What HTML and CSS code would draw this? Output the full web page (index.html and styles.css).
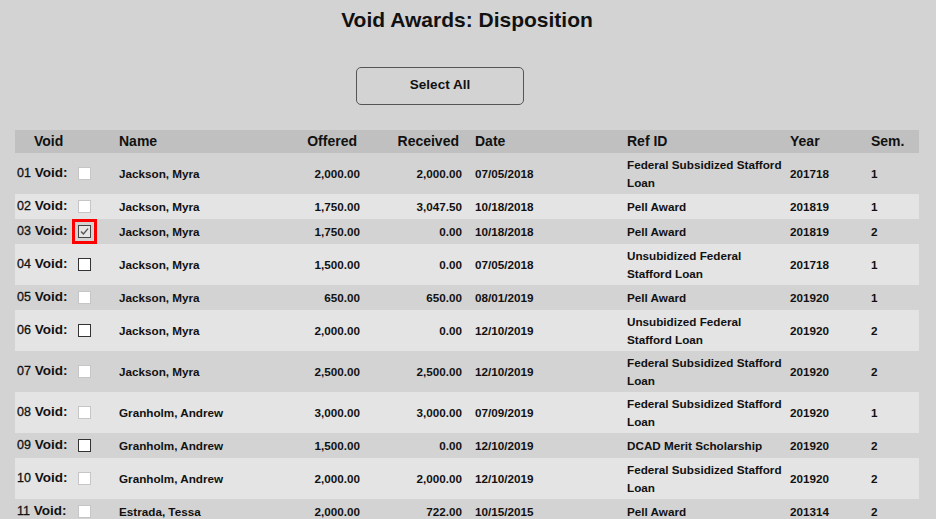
FILE: index.html
```html
<!DOCTYPE html>
<html>
<head>
<meta charset="utf-8">
<title>Void Awards: Disposition</title>
<link rel="stylesheet" href="styles.css">
</head>
<body>
<div class="page">
  <h1 class="title">Void Awards: Disposition</h1>
  <div class="toolbar">
    <button class="btn" type="button">Select All</button>
  </div>
  <table class="grid">
    <colgroup>
      <col class="c-void"><col class="c-name"><col class="c-off"><col class="c-rec"><col class="c-date"><col class="c-ref"><col class="c-year"><col class="c-sem">
    </colgroup>
    <thead>
      <tr>
        <th class="h-void">Void</th>
        <th class="h-name">Name</th>
        <th class="num h-num">Offered</th>
        <th class="num h-num">Received</th>
        <th class="date">Date</th>
        <th>Ref ID</th>
        <th>Year</th>
        <th>Sem.</th>
      </tr>
    </thead>
    <tbody>
      <tr>
        <td class="void"><div class="vwrap"><span class="vlab"><span class="idx">01</span> Void:</span><span class="cb cb-dis"></span></div></td>
        <td>Jackson, Myra</td><td class="num">2,000.00</td><td class="num">2,000.00</td><td class="date">07/05/2018</td>
        <td>Federal Subsidized Stafford<br>Loan</td><td>201718</td><td>1</td>
      </tr>
      <tr class="alt">
        <td class="void"><div class="vwrap"><span class="vlab"><span class="idx">02</span> Void:</span><span class="cb cb-dis"></span></div></td>
        <td>Jackson, Myra</td><td class="num">1,750.00</td><td class="num">3,047.50</td><td class="date">10/18/2018</td>
        <td>Pell Award</td><td>201819</td><td>1</td>
      </tr>
      <tr>
        <td class="void"><div class="vwrap"><span class="vlab"><span class="idx">03</span> Void:</span><span class="cb cb-on focus"><svg viewBox="0 0 11 11" width="11" height="11"><path d="M2 5.6 L4.4 8 L9 2.6" fill="none" stroke="#555" stroke-width="1.4"/></svg></span></div></td>
        <td>Jackson, Myra</td><td class="num">1,750.00</td><td class="num">0.00</td><td class="date">10/18/2018</td>
        <td>Pell Award</td><td>201819</td><td>2</td>
      </tr>
      <tr class="alt">
        <td class="void"><div class="vwrap"><span class="vlab"><span class="idx">04</span> Void:</span><span class="cb cb-en"></span></div></td>
        <td>Jackson, Myra</td><td class="num">1,500.00</td><td class="num">0.00</td><td class="date">07/05/2018</td>
        <td>Unsubidized Federal<br>Stafford Loan</td><td>201718</td><td>1</td>
      </tr>
      <tr>
        <td class="void"><div class="vwrap"><span class="vlab"><span class="idx">05</span> Void:</span><span class="cb cb-dis"></span></div></td>
        <td>Jackson, Myra</td><td class="num">650.00</td><td class="num">650.00</td><td class="date">08/01/2019</td>
        <td>Pell Award</td><td>201920</td><td>1</td>
      </tr>
      <tr class="alt">
        <td class="void"><div class="vwrap"><span class="vlab"><span class="idx">06</span> Void:</span><span class="cb cb-en"></span></div></td>
        <td>Jackson, Myra</td><td class="num">2,000.00</td><td class="num">0.00</td><td class="date">12/10/2019</td>
        <td>Unsubidized Federal<br>Stafford Loan</td><td>201920</td><td>2</td>
      </tr>
      <tr>
        <td class="void"><div class="vwrap"><span class="vlab"><span class="idx">07</span> Void:</span><span class="cb cb-dis"></span></div></td>
        <td>Jackson, Myra</td><td class="num">2,500.00</td><td class="num">2,500.00</td><td class="date">12/10/2019</td>
        <td>Federal Subsidized Stafford<br>Loan</td><td>201920</td><td>2</td>
      </tr>
      <tr class="alt">
        <td class="void"><div class="vwrap"><span class="vlab"><span class="idx">08</span> Void:</span><span class="cb cb-dis"></span></div></td>
        <td>Granholm, Andrew</td><td class="num">3,000.00</td><td class="num">3,000.00</td><td class="date">07/09/2019</td>
        <td>Federal Subsidized Stafford<br>Loan</td><td>201920</td><td>1</td>
      </tr>
      <tr>
        <td class="void"><div class="vwrap"><span class="vlab"><span class="idx">09</span> Void:</span><span class="cb cb-en"></span></div></td>
        <td>Granholm, Andrew</td><td class="num">1,500.00</td><td class="num">0.00</td><td class="date">12/10/2019</td>
        <td>DCAD Merit Scholarship</td><td>201920</td><td>2</td>
      </tr>
      <tr class="alt">
        <td class="void"><div class="vwrap"><span class="vlab"><span class="idx">10</span> Void:</span><span class="cb cb-dis"></span></div></td>
        <td>Granholm, Andrew</td><td class="num">2,000.00</td><td class="num">2,000.00</td><td class="date">12/10/2019</td>
        <td>Federal Subsidized Stafford<br>Loan</td><td>201920</td><td>2</td>
      </tr>
      <tr>
        <td class="void"><div class="vwrap"><span class="vlab"><span class="idx">11</span> Void:</span><span class="cb cb-dis"></span></div></td>
        <td>Estrada, Tessa</td><td class="num">2,000.00</td><td class="num">722.00</td><td class="date">10/15/2015</td>
        <td>Pell Award</td><td>201314</td><td>2</td>
      </tr>
    </tbody>
  </table>
</div>
</body>
</html>
```

FILE: styles.css
```css
html, body {
  margin: 0;
  padding: 0;
  background: #d3d3d3;
}
body {
  font-family: "Liberation Sans", Arial, sans-serif;
  color: #111;
  overflow: hidden;
}
.page {
  padding: 8px 17px 0 15px;
}
.title {
  margin: 0;
  text-align: center;
  font-size: 21px;
  line-height: 24px;
  font-weight: bold;
  color: #111;
}
.toolbar {
  display: flex;
  margin-top: 35px;
  padding-left: 341px;
}
.btn {
  width: 168px;
  height: 38px;
  background: #d3d3d3;
  border: 1px solid #555;
  border-radius: 5px;
  font-family: "Liberation Sans", Arial, sans-serif;
  font-size: 13.5px;
  font-weight: bold;
  color: #111;
  padding: 0 0 3px 0;
}
.grid {
  margin-top: 25px;
  width: 904px;
  border-collapse: collapse;
  table-layout: fixed;
}
.c-void { width: 101px; }
.c-name { width: 174px; }
.c-off { width: 73px; }
.c-rec { width: 102px; }
.c-date { width: 159px; }
.c-ref { width: 163px; }
.c-year { width: 81px; }
.c-sem { width: 51px; }

thead tr {
  background: #c0c0c0;
}
th {
  text-align: left;
  font-size: 14px;
  font-weight: bold;
  line-height: 19px;
  padding: 2px 3px 2px 3px;
  white-space: nowrap;
}
th.h-void { padding-left: 19px; }
th.h-num { padding-right: 6px; }
td {
  font-size: 11.7px;
  font-weight: bold;
  line-height: 17.5px;
  padding: 3px 3px;
  vertical-align: middle;
  white-space: nowrap;
}
.num { text-align: right; }
.date { padding-left: 10px; }
tbody tr { background: #d3d3d3; }
tbody tr.alt { background: #e4e4e4; }

td.void {
  padding-left: 2px;
  line-height: 19px;
}
.vwrap {
  display: grid;
  grid-template-columns: 61px 13px;
  align-items: center;
  height: 19px;
}
.vlab {
  display: block;
  height: 19px;
  line-height: 19px;
  font-size: 13.5px;
  font-weight: bold;
  transform: translateY(-1px);
}
.idx {
  font-size: 12.5px;
  font-weight: normal;
  line-height: 1;
  -webkit-text-stroke: 0.3px #111;
}
.cb {
  box-sizing: border-box;
  width: 13px;
  height: 13px;
  background: #fff;
  display: flex;
  align-items: center;
  justify-content: center;
}
.cb-dis {
  border: 1px solid #c6c6c6;
}
.cb-en {
  border: 1px solid #333;
}
.cb-on {
  border: 1px solid #444;
  background: #e6e6e6;
}
.focus {
  outline: 3px solid #ff0000;
  outline-offset: 3px;
}
```
